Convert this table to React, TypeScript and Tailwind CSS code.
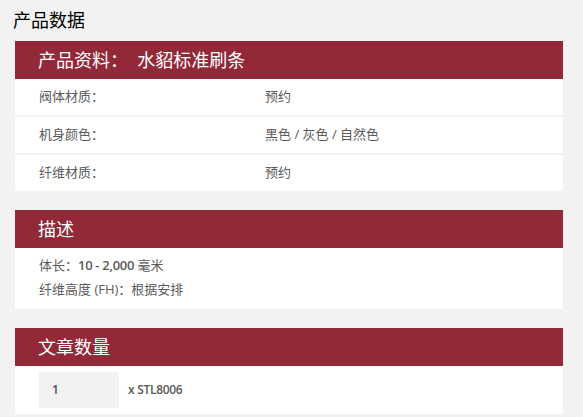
import React from "react";

const cjk = "font-['Open_Sans','Noto_Sans_CJK_SC',sans-serif]";

function Header({ title }: { title: string }) {
	return (
		<div className="h-[38px] flex items-center bg-[#922838] pl-[23px]">
			<h2 className="text-[18px] text-white leading-none whitespace-pre">{title}</h2>
		</div>
	);
}

export default function App() {
	const specs = [
		{ label: "阀体材质：", value: "预约" },
		{ label: "机身颜色：", value: "黑色 / 灰色 / 自然色" },
		{ label: "纤维材质：", value: "预约" },
	];

	return (
		<div className={`w-[583px] h-[417px] bg-[#f2f2f2] px-[15px] pt-[9px] overflow-hidden ${cjk}`}>
			<h1 className="text-[18px] text-black leading-[22px] -ml-[2px] mb-[10px]">产品数据</h1>

			<div className="w-[548px]">
				<Header title="产品资料：  水貂标准刷条" />
				<div className="flex flex-col gap-[2px]">
					{specs.map((s) => (
						<div key={s.label} className="h-[36px] bg-white flex items-center text-[13px] text-[#5a5a5a]">
							<span className="w-[250px] pl-[24px]">{s.label}</span>
							<span>{s.value}</span>
						</div>
					))}
				</div>
			</div>

			<div className="w-[548px] mt-[19px]">
				<Header title="描述" />
				<div className="bg-white h-[61px] pl-[24px] pt-[5px] text-[13px] text-[#5a5a5a] leading-[24px]">
					<p>
						体长：<span className="font-semibold tracking-[-0.3px]">10 - 2,000</span> 毫米
					</p>
					<p>纤维高度 (FH)：根据安排</p>
				</div>
			</div>

			<div className="w-[548px] mt-[19px]">
				<Header title="文章数量" />
				<div className="bg-white h-[48px] flex items-center pl-[24px]">
					<div className="w-[80px] h-[36px] bg-[#f2f2f2] flex items-center pl-[13px] text-[12px] font-semibold text-[#4a5060]">
						1
					</div>
					<span className="ml-[9px] text-[12px] font-semibold text-[#5a5a5a] tracking-[-0.3px]">x STL8006</span>
				</div>
			</div>
		</div>
	);
}
